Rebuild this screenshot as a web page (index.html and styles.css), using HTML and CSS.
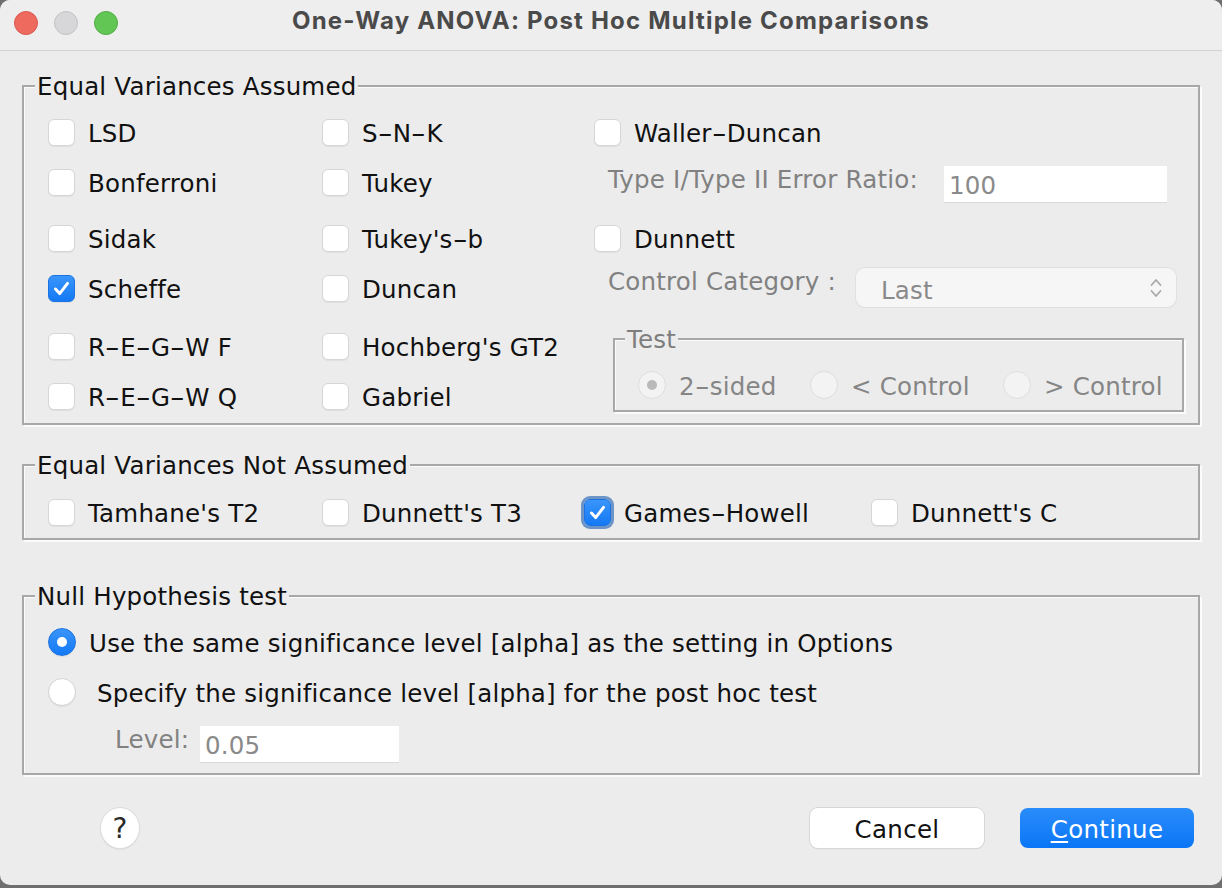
FILE: index.html
```html
<!DOCTYPE html>
<html>
<head>
<meta charset="utf-8">
<title>One-Way ANOVA: Post Hoc Multiple Comparisons</title>
<link rel="stylesheet" href="styles.css">
</head>
<body>
<div class="window">
  <div class="titlebar">
    <div class="lights">
      <span class="light red"></span>
      <span class="light gray"></span>
      <span class="light green"></span>
    </div>
    <div class="title">One-Way ANOVA: Post Hoc Multiple Comparisons</div>
    <div></div>
  </div>

  <div class="content">
    <fieldset class="group g1">
      <legend>Equal Variances Assumed</legend>
      <div class="g1-body">
        <div class="left-grid">
          <label class="check"><span class="box"></span><span class="txt">LSD</span></label>
          <label class="check"><span class="box"></span><span class="txt">S<span class="hy">-</span>N<span class="hy">-</span>K</span></label>
          <label class="check"><span class="box"></span><span class="txt">Bonferroni</span></label>
          <label class="check"><span class="box"></span><span class="txt">Tukey</span></label>
          <label class="check"><span class="box"></span><span class="txt">Sidak</span></label>
          <label class="check"><span class="box"></span><span class="txt">Tukey's<span class="hy">-</span>b</span></label>
          <label class="check"><span class="box checked"><svg viewBox="0 0 27 27"><path d="M7 14 L11.5 19 L20 8" /></svg></span><span class="txt">Scheffe</span></label>
          <label class="check"><span class="box"></span><span class="txt">Duncan</span></label>
          <label class="check"><span class="box"></span><span class="txt">R<span class="hy">-</span>E<span class="hy">-</span>G<span class="hy">-</span>W F</span></label>
          <label class="check"><span class="box"></span><span class="txt">Hochberg's GT2</span></label>
          <label class="check"><span class="box"></span><span class="txt">R<span class="hy">-</span>E<span class="hy">-</span>G<span class="hy">-</span>W Q</span></label>
          <label class="check"><span class="box"></span><span class="txt">Gabriel</span></label>
        </div>
        <div class="right-col">
          <label class="check"><span class="box"></span><span class="txt">Waller<span class="hy">-</span>Duncan</span></label>
          <div class="sub-row ratio-row">
            <span class="sublabel ratio-label">Type I/Type II Error Ratio:</span>
            <span class="textfield ratio-field">100</span>
          </div>
          <label class="check dunnett"><span class="box"></span><span class="txt">Dunnett</span></label>
          <div class="sub-row control-row">
            <span class="sublabel control-label">Control Category :</span>
            <span class="select">
              <span>Last</span>
              <svg class="chev" viewBox="0 0 12 22"><path d="M1.5 8 L6 3 L10.5 8 M1.5 14 L6 19 L10.5 14" /></svg>
            </span>
          </div>
          <fieldset class="group test">
            <legend>Test</legend>
            <div class="test-body">
              <span class="radio-item r1"><span class="radio disabled on"></span><span class="txt">2<span class="hy">-</span>sided</span></span>
              <span class="radio-item r2"><span class="radio disabled"></span><span class="txt">&lt; Control</span></span>
              <span class="radio-item r3"><span class="radio disabled"></span><span class="txt">&gt; Control</span></span>
            </div>
          </fieldset>
        </div>
      </div>
    </fieldset>

    <fieldset class="group g2">
      <legend>Equal Variances Not Assumed</legend>
      <div class="g2-body">
        <label class="check"><span class="box"></span><span class="txt">Tamhane's T2</span></label>
        <label class="check"><span class="box"></span><span class="txt">Dunnett's T3</span></label>
        <label class="check"><span class="box checked focus"><svg viewBox="0 0 27 27"><path d="M7 14 L11.5 19 L20 8" /></svg></span><span class="txt">Games<span class="hy">-</span>Howell</span></label>
        <label class="check"><span class="box"></span><span class="txt">Dunnett's C</span></label>
      </div>
    </fieldset>

    <fieldset class="group g3">
      <legend>Null Hypothesis test</legend>
      <div class="g3-body">
        <label class="check"><span class="radio on"></span><span class="txt">Use the same significance level [alpha] as the setting in Options</span></label>
        <label class="check"><span class="radio"></span><span class="txt spaced">Specify the significance level [alpha] for the post hoc test</span></label>
        <div class="level-row">
          <span class="sublabel level-label">Level:</span>
          <span class="textfield level-field">0.05</span>
        </div>
      </div>
    </fieldset>

    <div class="buttons">
      <span class="help">?</span>
      <span class="spacer"></span>
      <span class="btn cancel">Cancel</span>
      <span class="btn primary"><u>C</u>ontinue</span>
    </div>
  </div>
</div>
</body>
</html>
```

FILE: styles.css
```css
html, body {
  margin: 0;
  padding: 0;
}
body {
  background: #6f6f6f;
  font-family: "DejaVu Sans", "Liberation Sans", sans-serif;
  color: #111;
  width: 1222px;
  height: 888px;
  overflow: hidden;
}
.window {
  width: 1222px;
  height: 885px;
  background: #ececec;
  border-radius: 10px;
  overflow: hidden;
  display: flex;
  flex-direction: column;
}
.titlebar {
  height: 50px;
  border-bottom: 1px solid #d2d2d2;
  background: #eeeeef;
  display: grid;
  grid-template-columns: 1fr auto 1fr;
}
.lights {
  display: flex;
  gap: 16px;
  padding: 11px 0 0 14px;
}
.light {
  width: 24px;
  height: 24px;
  border-radius: 50%;
  box-sizing: border-box;
}
.light.red { background: #ee6a5f; border: 1px solid #d8574d; }
.light.gray { background: #d7d7d9; border: 1px solid #c3c3c5; }
.light.green { background: #62c655; border: 1px solid #50ad42; }
.title {
  font-family: Inter, "Liberation Sans", sans-serif;
  font-weight: 700;
  font-size: 24px;
  letter-spacing: 1.2px;
  line-height: 42px;
  color: #4a4a4a;
}

.content {
  padding: 21px 22px 0 22px;
  display: flex;
  flex-direction: column;
  font-size: 24.5px;
  letter-spacing: 0.2px;
}

.group {
  margin: 0;
  padding: 0;
  min-width: 0;
  border: 2px solid #a8a8a8;
  box-shadow: 2px 2px 0 #fbfbfb, inset 1px 1px 0 #fbfbfb;
}
.group legend {
  margin-left: 11px;
  padding: 2px 2px 0 2px;
  font-size: 24.5px;
  line-height: 26px;
  background: #ececec;
  color: #111;
}

.txt { padding-top: 2px; }
.hy {
  display: inline-block;
  transform: scaleX(1.7);
  margin: 0 3px;
}

.check {
  display: flex;
  align-items: center;
  height: 50px;
  white-space: nowrap;
}
.box {
  width: 27px;
  height: 27px;
  box-sizing: border-box;
  flex: none;
  margin-right: 13px;
  border-radius: 6px;
  background: #fff;
  border: 1px solid #d6d6d6;
  box-shadow: 0 1px 1px rgba(0,0,0,0.06);
  display: flex;
  align-items: center;
  justify-content: center;
}
.box svg {
  width: 27px;
  height: 27px;
}
.box svg path {
  fill: none;
  stroke: #fff;
  stroke-width: 3.2;
  stroke-linecap: round;
  stroke-linejoin: round;
}
.box.checked {
  background: linear-gradient(#3a95fb, #1479f5);
  border: 1px solid #1a73e0;
}
.box.focus {
  box-shadow: 0 0 0 3px #6c94c7;
}

.g1-body {
  display: flex;
  padding: 7px 0 2px 24px;
}
.left-grid {
  display: grid;
  grid-template-columns: 274px 272px;
  grid-template-rows: 50px 56px 50px 58px 50px 50px;
}
.left-grid .check {
  align-self: start;
}
.right-col {
  width: 604px;
  display: flex;
  flex-direction: column;
}
.sub-row {
  display: flex;
  align-items: flex-start;
}
.sublabel {
  line-height: 26px;
  padding-top: 1px;
  color: #818181;
  box-sizing: border-box;
  white-space: nowrap;
}
.ratio-row { margin-top: 9px; }
.ratio-label { width: 350px; padding-left: 14px; }
.textfield {
  display: block;
  box-sizing: border-box;
  background: #fff;
  height: 36px;
  line-height: 40px;
  color: #8a8a8a;
  padding-left: 5px;
  box-shadow: 0 1px 0 #d9d9d9;
}
.ratio-field { width: 223px; }
.dunnett { margin-top: 11px; }
.control-row { margin-top: 5px; }
.control-label { width: 262px; padding-left: 14px; }
.select {
  width: 320px;
  height: 39px;
  box-sizing: border-box;
  border-radius: 9px;
  background: #f6f6f6;
  box-shadow: 0 0 0 1px #e0e0e0, 0 1px 1px rgba(0,0,0,0.08);
  display: flex;
  align-items: center;
  justify-content: space-between;
  padding: 0 14px 0 25px;
  color: #8a8a8a;
}
.select span { padding-top: 5px; }
.chev {
  width: 12px;
  height: 22px;
}
.chev path {
  fill: none;
  stroke: #a9a9a9;
  stroke-width: 1.8;
  stroke-linecap: round;
  stroke-linejoin: round;
}

.group.test {
  margin: 18px 0 0 19px;
  width: 571px;
  box-sizing: border-box;
}
.group.test legend {
  margin-left: 10px;
  color: #7e7e7e;
}
.test-body {
  display: flex;
  align-items: center;
  height: 50px;
  padding: 7px 0 0 23px;
  color: #858585;
}
.radio-item {
  display: flex;
  align-items: center;
  white-space: nowrap;
}
.radio-item.r1 { width: 172px; }
.radio-item.r2 { width: 193px; }

.radio {
  width: 28px;
  height: 28px;
  box-sizing: border-box;
  border-radius: 50%;
  flex: none;
  margin-right: 13px;
  background: #fff;
  border: 1px solid #d4d4d4;
  box-shadow: 0 1px 1px rgba(0,0,0,0.06);
  position: relative;
}
.radio.on {
  background: linear-gradient(#3a95fb, #1479f5);
  border-color: #1a73e0;
}
.radio.on::after {
  content: "";
  position: absolute;
  left: 8px;
  top: 8px;
  width: 10px;
  height: 10px;
  border-radius: 50%;
  background: #fff;
}
.radio.disabled {
  background: #f3f3f3;
  border-color: #dedede;
  box-shadow: none;
}
.radio.disabled.on::after {
  background: #b9b9b9;
}

.g2 { margin-top: 26px; }
.g2-body {
  display: grid;
  grid-template-columns: 274px 262px 287px auto;
  padding: 8px 0 1px 24px;
}

.g3 { margin-top: 42px; }
.g3-body {
  display: flex;
  flex-direction: column;
  padding: 7px 0 11px 24px;
}
.spaced { padding-left: 8px; }
.level-row {
  display: flex;
  align-items: flex-start;
  margin-top: 9px;
}
.level-label { width: 152px; padding-left: 67px; }
.level-field { width: 199px; }

.buttons {
  display: flex;
  align-items: center;
  height: 40px;
  margin-top: 33px;
  padding: 0 6px 0 79px;
  letter-spacing: 0.3px;
}
.help {
  width: 38px;
  height: 40px;
  border-radius: 50%;
  background: #fff;
  box-shadow: 0 0 0 1px #dcdcdc, 0 1px 2px rgba(0,0,0,0.15);
  display: flex;
  align-items: center;
  justify-content: center;
  font-size: 28px;
  font-weight: 400;
  color: #2a2a2a;
}
.spacer { flex: 1; }
.btn {
  width: 174px;
  height: 40px;
  box-sizing: border-box;
  border-radius: 8px;
  display: flex;
  align-items: center;
  justify-content: center;
  padding-top: 2px;
}
.btn.cancel {
  background: #fff;
  color: #111;
  box-shadow: 0 0 0 1px #d6d6d6, 0 1px 1px rgba(0,0,0,0.12);
  margin-right: 36px;
}
.btn.primary {
  background: linear-gradient(#2a8cfa, #0a76f6);
  color: #fff;
}
.btn.primary u {
  text-decoration-thickness: 2px;
  text-underline-offset: 3px;
}
```
